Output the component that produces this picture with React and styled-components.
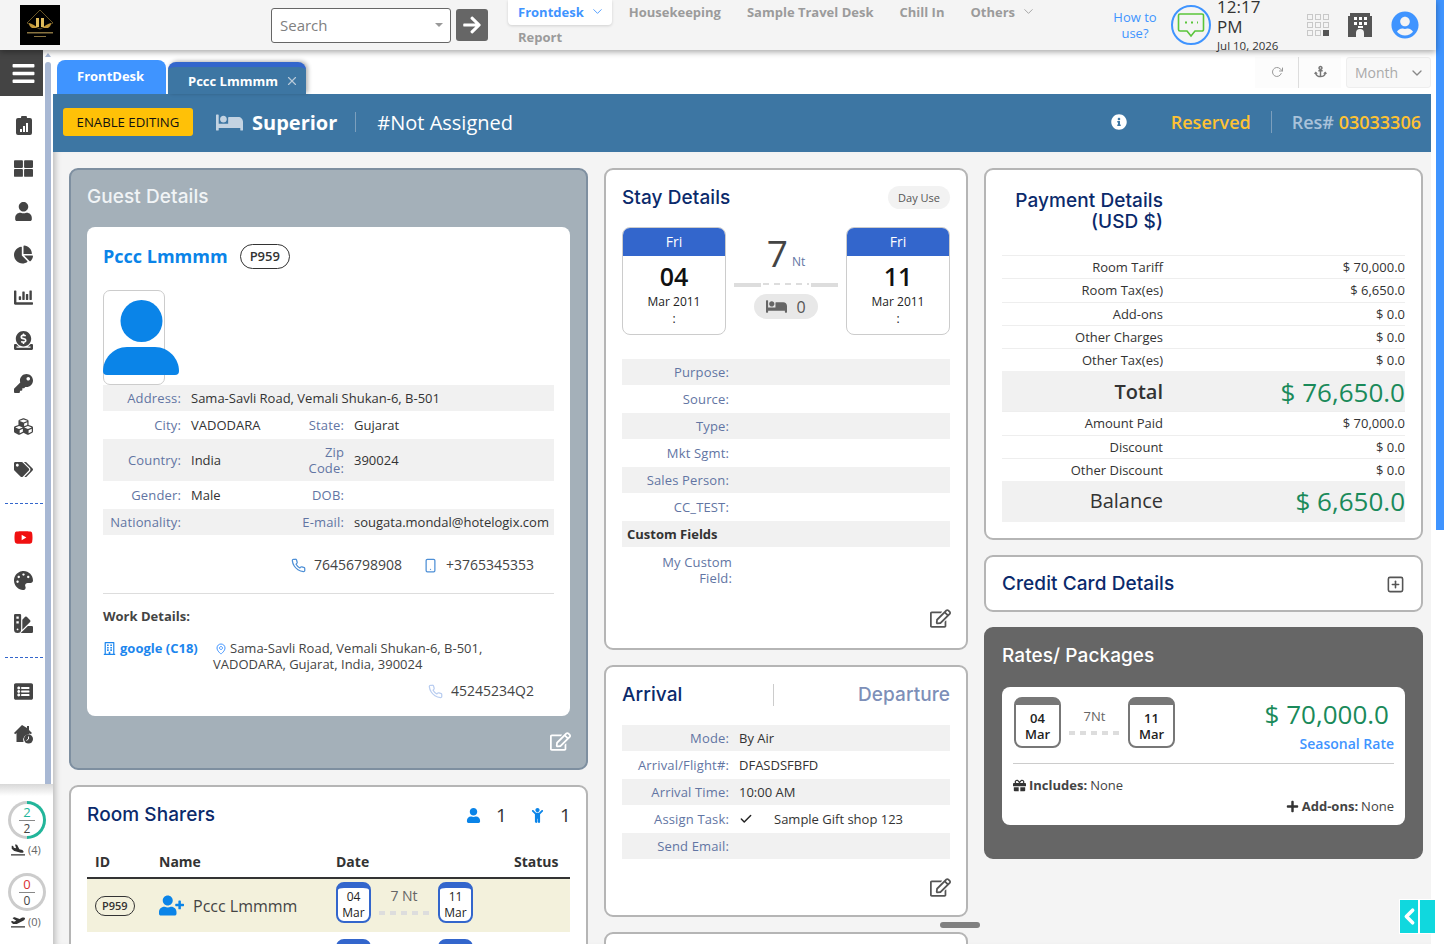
import React from "react";
import styled, { createGlobalStyle } from "styled-components";
import {
  FaAnchor, FaBed, FaChartPie, FaChild, FaCubes, FaDonate, FaGift, FaInfoCircle, FaKey,
  FaListAlt, FaPalette, FaPlaneArrival, FaPlaneDeparture, FaPlus, FaRegBuilding, FaRegEdit, FaSwatchbook,
  FaTags, FaThLarge, FaUser, FaUserCircle, FaUserPlus, FaYoutube, FaBars, FaArrowRight, FaChartBar,
} from "react-icons/fa";
import { FiCheck, FiChevronDown, FiPhone, FiPlusSquare, FiRotateCw, FiSmartphone, FiX, FiChevronLeft } from "react-icons/fi";
import { GrLocation } from "react-icons/gr";

const GlobalStyle = createGlobalStyle`
  html, body { margin: 0; height: 100%; overflow: hidden; background: #fff; }
  body { font-family: "Open Sans", "Liberation Sans", sans-serif; font-size: 13px; color: #333; }
  #root { height: 100%; }
  * { box-sizing: border-box; }
`;

const Page = styled.div`
  display: flex;
  width: 1444px;
  height: 944px;
  overflow: hidden;
  position: relative;
`;
const Shell = styled.div`
  width: 1436px;
  display: flex;
  flex-direction: column;
`;
const PageScroll = styled.div`
  width: 8px;
  height: 530px;
  background: #3f94ff;
`;

/* HEADER */
const Header = styled.header`
  height: 50px;
  flex: none;
  display: flex;
  background: #f4f4f4;
  box-shadow: 0 2px 6px rgba(0, 0, 0, 0.35);
  position: relative;
  z-index: 5;
`;
const LogoBox = styled.div`
  width: 40px;
  height: 40px;
  margin: 5px 0 0 20px;
  background: #000;
  flex: none;
`;
const SearchBox = styled.div`
  width: 180px;
  height: 35px;
  margin: 8px 0 0 211px;
  padding: 0 7px 2px 8px;
  display: flex;
  align-items: center;
  justify-content: space-between;
  background: #fff;
  border: 1px solid #666;
  border-radius: 3px;
  color: #808080;
  font-size: 15px;
  flex: none;
`;
const Caret = styled.span`
  border: 4px solid transparent;
  border-top: 4px solid #999;
  margin-top: 4px;
`;
const GoButton = styled.button`
  width: 32px;
  height: 32px;
  margin: 9px 0 0 5px;
  padding: 0;
  border: 0;
  border-radius: 3px;
  background: #666;
  color: #fff;
  display: flex;
  align-items: center;
  justify-content: center;
  font-size: 20px;
  flex: none;
`;
const Nav = styled.nav`
  width: 560px;
  margin-left: 20px;
  display: flex;
  flex-wrap: wrap;
  align-content: flex-start;
  flex: none;
`;
const NavItem = styled.span`
  height: 25px;
  padding: 0 ${(p) => (p.$active ? "7px" : "10px")} 2px ${(p) => (p.$active ? "10px" : "16px")};
  margin-right: ${(p) => (p.$active ? "1px" : "0")};
  display: flex;
  align-items: center;
  gap: 6px;
  font-size: 13px;
  font-weight: 700;
  color: ${(p) => (p.$active ? "#3f94ff" : "#9b9b9b")};
  background: ${(p) => (p.$active ? "#fff" : "transparent")};
  border-radius: 0 0 4px 4px;
  box-shadow: ${(p) => (p.$active ? "0 1px 3px rgba(0,0,0,.15)" : "none")};
  white-space: nowrap;
  svg { font-size: 15px; stroke-width: 1.4; }
`;
const NavBreak = styled.span`
  flex-basis: 100%;
  height: 0;
`;
const NavReport = styled(NavItem)`
  padding-left: 10px;
`;
const HowTo = styled.a`
  width: 50px;
  margin: 9px 0 0 42px;
  text-align: center;
  color: #3f94ff;
  font-size: 13px;
  line-height: 16px;
  flex: none;
`;
const ChatRing = styled.div`
  width: 40px;
  height: 40px;
  margin: 5px 0 0 11px;
  border: 2px solid #3f94ff;
  border-radius: 50%;
  display: flex;
  align-items: center;
  justify-content: center;
  flex: none;
`;
const Clock = styled.div`
  width: 70px;
  margin: -3px 0 0 6px;
  flex: none;
  color: #333;
  font-size: 17px;
  line-height: 19.5px;
  small { display: block; font-size: 11.5px; line-height: 20px; white-space: nowrap; }
`;
const HeaderIcons = styled.div`
  display: flex;
  align-items: center;
  gap: 19px;
  margin-left: 20px;
  height: 50px;
`;
const Avatar = styled(FaUserCircle)`
  font-size: 28px;
  color: #3f94ff;
`;

/* BODY AND SIDEBAR */
const Body = styled.div`
  flex: 1;
  display: flex;
  min-height: 0;
`;
const Sidebar = styled.aside`
  width: 53px;
  flex: none;
  display: flex;
  flex-direction: column;
  background: #fff;
`;
const SideTop = styled.div`
  flex: 1;
  display: flex;
  min-height: 0;
`;
const Rail = styled.div`
  width: 43px;
  flex: none;
`;
const Burger = styled.div`
  height: 46px;
  padding-left: 4px;
  background: #444;
  color: #fff;
  display: flex;
  align-items: center;
  justify-content: center;
  font-size: 25px;
  margin-bottom: 8px;
`;
const RailItem = styled.div`
  height: 43px;
  padding-left: 4px;
  display: flex;
  align-items: center;
  justify-content: center;
  color: ${(p) => p.$color || "#444"};
  font-size: 19px;
`;
const RailDivider = styled.div`
  height: 25px;
  display: flex;
  align-items: center;
  &::after {
    content: "";
    width: 38px;
    margin-left: 5px;
    border-top: 1px dashed #3366cc;
  }
`;
const RailScroll = styled.div`
  width: 6px;
  margin-left: 2px;
  position: relative;
  padding-top: 12px;
  flex: none;
  &::before {
    content: "";
    position: absolute;
    top: 3px;
    left: 0;
    border: 3px solid transparent;
    border-bottom: 4px solid #a8b8d4;
    border-top: 0;
  }
  &::after {
    content: "";
    display: block;
    height: 100%;
    background: #a8b8d4;
    border-radius: 3px 3px 0 0;
  }
`;
const SideBottom = styled.div`
  height: 160px;
  flex: none;
  background: linear-gradient(#d8d8d8, #fff 12px);
  padding-top: 17px;
  position: relative;
  display: flex;
  flex-direction: column;
  align-items: flex-start;
`;
const Gauge = styled.div`
  width: 38px;
  height: 38px;
  margin-left: 8px;
  border-radius: 50%;
  background: ${(p) => (p.$full ? "conic-gradient(#22b59a 0 50%, #ccc 50% 100%)" : "#ccc")};
  padding: 3px;
  flex: none;
`;
const GaugeFace = styled.div`
  width: 100%;
  height: 100%;
  border-radius: 50%;
  background: #fff;
  display: flex;
  flex-direction: column;
  align-items: center;
  justify-content: center;
  font-size: 12px;
  line-height: 15px;
  color: #444;
  b {
    font-weight: 400;
    font-size: 13px;
    line-height: 15px;
    width: 16px;
    text-align: center;
    border-bottom: 1px solid #888;
    color: ${(p) => p.$color};
  }
`;
const GaugeLabel = styled.div`
  margin: 4px 0 16px 11px;
  display: flex;
  align-items: center;
  gap: 3px;
  font-size: 11px;
  line-height: 14px;
  color: #666;
  svg { color: #333; font-size: 14px; }
`;

/* MAIN */
const Main = styled.main`
  width: 1378px;
  flex: none;
  display: flex;
  flex-direction: column;
  min-height: 0;
`;
const Gutter = styled.div`
  width: 5px;
  background: #fff;
`;
const TabBar = styled.div`
  height: 44px;
  flex: none;
  display: flex;
  align-items: flex-end;
  padding-left: 4px;
  gap: 2px;
  background: #fff;
  position: relative;
`;
const Tab = styled.div`
  height: ${(p) => (p.$current ? "32px" : "34px")};
  width: ${(p) => (p.$current ? "138px" : "109px")};
  padding: ${(p) => (p.$current ? "0 7px 0 20px" : "0 0 3px 20px")};
  display: flex;
  align-items: center;
  justify-content: space-between;
  background: ${(p) => (p.$current ? "#3d76a3" : "#3f94ff")};
  border-top: ${(p) => (p.$current ? "5px solid #3366cc" : "0")};
  border-radius: 8px 8px 0 0;
  box-shadow: ${(p) => (p.$current ? "2px -1px 4px rgba(0,0,0,.3)" : "none")};
  color: #fff;
  font-size: 13px;
  font-weight: 700;
  svg { color: #b9c9d8; font-size: 14px; }
`;
const TabTools = styled.div`
  margin-left: auto;
  align-self: flex-start;
  margin-top: 7px;
  display: flex;
  height: 31px;
  align-items: center;
  color: #777;
`;
const ToolButton = styled.span`
  width: 43px;
  height: 31px;
  padding-bottom: 2px;
  display: flex;
  align-items: center;
  justify-content: center;
  font-size: ${(p) => (p.$split ? "13px" : "12px")};
  color: ${(p) => (p.$split ? "#777" : "#999")};
  background: #fcfcfc;
  border-left: ${(p) => (p.$split ? "1px solid #ddd" : "0")};
`;
const PeriodSelect = styled.div`
  width: 85px;
  height: 31px;
  margin-left: 5px;
  padding: 0 5px 0 8px;
  display: flex;
  align-items: center;
  justify-content: space-between;
  background: #f8f8f8;
  border: 1px solid #eee;
  border-radius: 3px;
  color: #aaa;
  font-size: 14px;
  svg { color: #888; font-size: 16px; }
`;
const Band = styled.div`
  height: 58px;
  flex: none;
  padding: 0 10px 2px;
  display: flex;
  align-items: center;
  background: #3d76a3;
  color: #fff;
`;
const EnableButton = styled.button`
  width: 130px;
  height: 28px;
  padding: 0;
  border: 0;
  border-radius: 3px;
  background: #ffc107;
  color: #111;
  font: 500 13.2px "Open Sans", sans-serif;
`;
const RoomType = styled.span`
  margin-left: 23px;
  display: flex;
  align-items: center;
  gap: 9px;
  font-size: 20px;
  font-weight: 700;
  svg { font-size: 27px; color: #c3d3e2; }
`;
const BandDivider = styled.span`
  width: 1px;
  height: ${(p) => p.$h || "20px"};
  margin: ${(p) => p.$m || "0 21px 0 18px"};
  background: #7c9fbd;
`;
const RoomNumber = styled.span`
  font-size: 20px;
`;
const InfoIcon = styled(FaInfoCircle)`
  margin-left: auto;
  font-size: 16px;
`;
const StatusText = styled.span`
  margin-left: 44px;
  color: #ffc233;
  font-size: 18px;
  font-weight: 600;
`;
const ResNumber = styled.span`
  color: #a9c2da;
  font-size: 18px;
  font-weight: 600;
  b { color: #ffc233; font-weight: 600; }
`;
const Content = styled.div`
  flex: 1;
  min-height: 0;
  overflow: hidden;
  padding: 16px 8px 0 16px;
  display: flex;
  gap: 16px;
  background: #f4f4f4;
  box-shadow: inset 7px 0 6px -5px rgba(0, 0, 0, 0.25);
`;
const Column = styled.div`
  width: ${(p) => p.$w}px;
  flex: none;
  display: flex;
  flex-direction: column;
  gap: 15px;
`;
const Panel = styled.section`
  height: ${(p) => p.$h}px;
  flex: none;
  padding: 16px;
  display: flex;
  flex-direction: column;
  background: ${(p) => p.$bg || "#fff"};
  border: 2px solid ${(p) => p.$line || "#b5b5b5"};
  border-radius: 9px;
`;
const PanelTitle = styled.h2`
  margin: 0;
  font: 500 19px/22px Inter, "Open Sans", sans-serif;
  letter-spacing: 0.08px;
  color: ${(p) => p.$color || "#0b2a6b"};
`;
const EditIcon = styled(FaRegEdit)`
  margin: auto -1px ${(p) => p.$lift || 0}px 0;
  align-self: flex-end;
  flex: none;
  font-size: 21px;
  color: ${(p) => p.$color || "#555"};
`;

/* GUEST */
const GuestCard = styled.div`
  height: 489px;
  margin-top: 19px;
  padding: 16px;
  background: #fff;
  border-radius: 8px;
  flex: none;
`;
const GuestName = styled.div`
  display: flex;
  align-items: center;
  gap: 12px;
  height: 26px;
  font-size: 18px;
  font-weight: 700;
  color: #0a84e8;
`;
const IdPill = styled.span`
  padding: 0 ${(p) => (p.$small ? "6px" : "9px")};
  height: ${(p) => (p.$small ? "20px" : "25px")};
  display: inline-flex;
  align-items: center;
  border: 1px solid #333;
  border-radius: 13px;
  font-size: ${(p) => (p.$small ? "11px" : "13px")};
  font-weight: 600;
  color: #333;
`;
const PhotoBox = styled.div`
  width: 62px;
  height: 95px;
  margin-top: 21px;
  padding-top: 9px;
  border: 1px solid #ccc;
  border-radius: 7px;
  svg { display: block; overflow: visible; margin-left: -1px; }
`;
const InfoRow = styled.div`
  min-height: ${(p) => (p.$shade ? "26px" : "28px")};
  padding: ${(p) => (p.$tall ? "5px 0" : "0")};
  display: grid;
  grid-template-columns: ${(p) => p.$cols};
  column-gap: 10px;
  align-items: center;
  background: ${(p) => (p.$shade ? "#f1f1f1" : "transparent")};
  line-height: 16px;
`;
const Label = styled.span`
  text-align: right;
  font-weight: 500;
  letter-spacing: 0.15px;
  color: #6275a3;
`;
const NarrowLabel = styled(Label)`
  padding-left: 30px;
  margin-top: 2px;
`;
const Value = styled.span`
  color: #333;
  white-space: nowrap;
  grid-column: ${(p) => (p.$wide ? "span 3" : "auto")};
`;
const PhoneRow = styled.div`
  margin-top: ${(p) => p.$mt || "20px"};
  padding-right: 20px;
  display: flex;
  justify-content: flex-end;
  align-items: center;
  gap: 8px;
  font-size: 14px;
  line-height: 20px;
  color: #444;
  svg { font-size: 15px; color: ${(p) => p.$icon || "#4d8fd6"}; }
`;
const PhoneNo = styled.span`
  margin-right: ${(p) => (p.$spaced ? "13px" : "0")};
`;
const Rule = styled.hr`
  margin: 18px 0 0;
  border: 0;
  border-top: 1px solid #ddd;
`;
const WorkTitle = styled.div`
  margin-top: 13px;
  font-weight: 700;
  color: #444;
  line-height: 18px;
`;
const WorkRow = styled.div`
  margin-top: 15px;
  display: grid;
  grid-template-columns: 110px 1fr;
  align-items: start;
  line-height: 16px;
  color: #444;
`;
const Company = styled.span`
  display: flex;
  align-items: center;
  gap: 4px;
  font-weight: 700;
  color: #1c86ee;
  svg { font-size: 13px; }
`;
const Address = styled.span`
  svg { vertical-align: -2px; margin: 0 3px 0 2px; font-size: 12px; }
  svg path { stroke: #3f94ff; }
`;

/* SHARERS */
const SharerHead = styled.div`
  display: flex;
  align-items: center;
  justify-content: space-between;
  height: 24px;
`;
const Counts = styled.div`
  display: flex;
  align-items: center;
  margin-right: 2px;
  font-size: 19px;
  color: #333;
  svg { color: #0a84e8; font-size: 15px; margin-right: 15px; }
  span { width: 34px; }
  span:last-child { width: 8px; }
`;
const SharerGrid = styled.div`
  margin-top: 25px;
  display: grid;
  grid-template-columns: 72px 177px 178px 1fr;
`;
const HeadCell = styled.div`
  padding: 0 0 6px ${(p) => p.$pad || "0"};
  font-size: 14px;
  font-weight: 700;
  line-height: 19px;
  color: #333;
  border-bottom: 2px solid #333;
`;
const SharerCell = styled.div`
  height: ${(p) => p.$h || "53px"};
  display: flex;
  align-items: center;
  gap: 9px;
  padding-left: ${(p) => p.$pad || "0"};
  background: ${(p) => p.$bg || "#f3f1dc"};
  font-size: 16px;
  color: #444;
  svg { color: #0a84e8; font-size: 25px; }
`;
const SharerGap = styled.div`
  grid-column: 1 / -1;
  height: 4px;
`;
const MiniCard = styled.div`
  width: ${(p) => (p.$big ? "47px" : "35px")};
  height: ${(p) => (p.$big ? "51px" : "41px")};
  flex: none;
  display: flex;
  align-items: center;
  justify-content: center;
  text-align: center;
  background: #fff;
  border: 2px solid ${(p) => (p.$big ? "#777" : "#3366cc")};
  border-top-width: ${(p) => (p.$big ? "8px" : "6px")};
  border-radius: 8px;
  font-size: ${(p) => (p.$big ? "13px" : "12px")};
  font-weight: ${(p) => (p.$big ? "600" : "400")};
  line-height: 16px;
  color: #222;
`;
const MiniStay = styled.div`
  flex: 1;
  display: flex;
  flex-direction: column;
  align-items: center;
  gap: 6px;
  margin: ${(p) => (p.$big ? "10px 8px 0" : "5px 9px 0 8px")};
  color: #666;
  font-size: ${(p) => (p.$big ? "13px" : "14px")};
  line-height: 18px;
`;
const Dashes = styled.div`
  width: 100%;
  height: ${(p) => p.$h || "4px"};
  background: repeating-linear-gradient(90deg, #ddd 0 6px, transparent 6px 11px);
`;
const DateCell = styled(SharerCell)`
  grid-column: span 2;
  align-items: flex-start;
  gap: 0;
  padding: 3px 97px 0 0;
`;

/* STAY */
const PanelHead = styled.div`
  display: flex;
  align-items: center;
  justify-content: space-between;
  height: 23px;
`;
const DayUse = styled.span`
  width: 62px;
  height: 23px;
  display: flex;
  align-items: center;
  justify-content: center;
  background: #f2f2f2;
  border-radius: 12px;
  font-size: 11px;
  color: #555;
`;
const StayDates = styled.div`
  margin-top: 18px;
  display: grid;
  grid-template-columns: 104px 1fr 104px;
  column-gap: 8px;
`;
const DateCard = styled.div`
  height: 108px;
  display: flex;
  flex-direction: column;
  align-items: center;
  border: 1px solid #ccc;
  border-radius: 8px;
  overflow: hidden;
  font-size: 12px;
  line-height: 16px;
  color: #222;
  strong { margin-top: 3px; font-size: 25px; font-weight: 600; line-height: 34px; color: #111; }
  span { margin-top: 1px; }
`;
const DateHead = styled.div`
  width: calc(100% + 2px);
  height: 29px;
  margin-top: -1px;
  display: flex;
  align-items: center;
  justify-content: center;
  background: #3366cc;
  color: #fff;
  font-size: 14px;
`;
const StayNights = styled.div`
  display: flex;
  flex-direction: column;
  align-items: center;
`;
const Nights = styled.div`
  height: 48px;
  display: flex;
  align-items: flex-end;
  gap: 4px;
  margin-top: 1px;
  font-size: 37px;
  line-height: 46px;
  color: #444;
  span { font-size: 12px; line-height: 28px; color: #6275a3; }
`;
const NightLine = styled.div`
  width: 100%;
  margin-top: 7px;
  display: grid;
  grid-template-columns: 27px 1fr 27px;
  column-gap: 2px;
  i { background: #ddd; height: 4px; }
`;
const BedPill = styled.div`
  width: 64px;
  height: 25px;
  margin-top: 7px;
  display: flex;
  align-items: center;
  justify-content: center;
  gap: 9px;
  background: #e8e8e8;
  border-radius: 13px;
  font-size: 16px;
  color: #555;
  svg { font-size: 21px; color: #666; }
`;
const DetailRows = styled.div`
  margin-top: ${(p) => p.$mt || "24px"};
`;
const CustomHead = styled.div`
  height: 26px;
  padding-left: 5px;
  display: flex;
  align-items: center;
  background: #f1f1f1;
  font-weight: 700;
  color: #333;
`;

/* ARRIVAL */
const ArrivalHead = styled.div`
  margin-top: 1px;
  height: 22px;
  display: grid;
  grid-template-columns: 151px 1fr;
  align-items: center;
`;
const ArrivalTab = styled(PanelTitle)`
  height: 22px;
  text-align: ${(p) => (p.$off ? "right" : "left")};
  color: ${(p) => (p.$off ? "#7d8fb8" : "#0b2a6b")};
  border-left: ${(p) => (p.$off ? "1px solid #ccc" : "0")};
`;
const CheckIcon = styled(FiCheck)`
  margin-right: 21px;
  font-size: 14px;
  stroke-width: 2.5;
  vertical-align: -2px;
  color: #222;
`;
const NextPanel = styled.section`
  height: 60px;
  flex: none;
  background: #fff;
  border: 2px solid #b5b5b5;
  border-radius: 9px;
`;

/* PAYMENT */
const PayTitle = styled(PanelTitle)`
  width: 161px;
  margin: 4px 0 23px;
  text-align: right;
  line-height: 21px;
`;
const PayRow = styled.div`
  height: 23.4px;
  display: grid;
  grid-template-columns: 161px 1fr;
  align-items: center;
  text-align: right;
  border-top: 1px solid #eee;
  color: #333;
  line-height: 16px;
`;
const PayTotalRow = styled(PayRow)`
  height: ${(p) => (p.$balance ? "41px" : "40px")};
  padding: ${(p) => (p.$balance ? "0 0 2px" : "2px 0 0")};
  border-top: 0;
  background: #f1f1f1;
`;
const PayRowLabel = styled.span`
  font-size: ${(p) => p.$size || "13px"};
  font-weight: ${(p) => p.$weight || 400};
  white-space: nowrap;
`;
const Amount = styled.span`
  color: #1a8a5a;
  font-size: 26px;
  font-weight: 400;
  line-height: 34px;
  white-space: nowrap;
`;
const CardHead = styled.div`
  display: flex;
  align-items: center;
  justify-content: space-between;
  height: 22px;
  svg { font-size: 19px; color: #555; }
`;

/* RATES */
const RateCard = styled.div`
  height: 138px;
  margin-top: 20px;
  padding: 10px 11px;
  background: #fff;
  border-radius: 8px;
  flex: none;
`;
const RateTop = styled.div`
  display: flex;
  height: 67px;
  border-bottom: 1px solid #ccc;
`;
const RateStay = styled.div`
  width: 161px;
  margin-left: 1px;
  display: flex;
  align-items: flex-start;
`;
const RatePrice = styled.div`
  flex: 1;
  text-align: right;
  color: #3f94ff;
  font-size: 14px;
  font-weight: 600;
  line-height: 18px;
`;
const PriceLine = styled(Amount)`
  display: block;
  margin: 0 5px 4px 0;
`;
const RateLine = styled.div`
  margin-top: ${(p) => p.$mt};
  display: flex;
  justify-content: ${(p) => (p.$right ? "flex-end" : "flex-start")};
  align-items: center;
  gap: 3px;
  line-height: 18px;
  color: #444;
  b { font-weight: 700; }
  svg { font-size: 13px; color: #333; }
`;
const ScrollThumb = styled.div`
  position: absolute;
  left: 940px;
  top: 922px;
  width: 40px;
  height: 6px;
  border-radius: 3px;
  background: #808080;
`;
const Dock = styled.div`
  position: absolute;
  right: 8px;
  top: 899px;
  padding: 1px;
  display: flex;
  gap: 2px;
  background: #fff;
`;
const DockButton = styled.span`
  width: ${(p) => p.$w}px;
  height: 33px;
  display: flex;
  align-items: center;
  justify-content: center;
  background: #10d8de;
  color: #fff;
  font-size: 25px;
  svg { stroke-width: 3.5; flex: none; }
`;

const ClipboardIcon = () => (
  <svg width="16" height="19" viewBox="0 0 16 19">
    <path fill="#444" d="M2 2h3a3 3 0 0 1 6 0h3a2 2 0 0 1 2 2v13a2 2 0 0 1-2 2H2a2 2 0 0 1-2-2V4a2 2 0 0 1 2-2z" />
    <path fill="#fff" d="M4 13h2v3H4zM7 10h2v6H7zM10 7h2v9h-2z" />
  </svg>
);
const HouseClockIcon = () => (
  <svg width="20" height="19" viewBox="0 0 20 19">
    <path fill="#444" d="M8 0 0 8l1.2 1.2L2.5 8v9h7a5.5 5.5 0 0 1 6-7.5V8l1.2 1.2L18 8l-3-3V1h-2v2z" />
    <circle cx="14.5" cy="14" r="4.5" fill="#444" />
    <path stroke="#fff" strokeWidth="1" fill="none" d="M14.5 11.5V14l-2 1.5" />
  </svg>
);
const PhotoPerson = () => (
  <svg width="76" height="76" viewBox="0 0 76 76">
    <circle cx="38.5" cy="21" r="21" fill="#0a84e8" />
    <path fill="#0a84e8" d="M24 47h28c14 0 24 12 24 24a4 4 0 0 1-4 4H4a4 4 0 0 1-4-4c0-12 10-24 24-24z" />
  </svg>
);
const Logo = () => (
  <svg width="40" height="40" viewBox="0 0 40 40">
    <path fill="none" stroke="#a98a3c" strokeWidth=".6" d="M20 5 33 18 20 24 7 18z" />
    <path fill="#c49a3a" d="M9 18c3 1 6 2 8 5h-5c-2-1-3-3-3-5zM31 18c-3 1-6 2-8 5h5c2-1 3-3 3-5z" />
    <path fill="#e0bc5c" d="M16 13h3v9h-3zM21 13h3v9h-3z" />
    <path fill="#8a7440" d="M7 27h26v1.4H7zM14 31h12v1H14z" />
  </svg>
);
const ChatIcon = () => (
  <svg width="28" height="26" viewBox="0 0 28 26" fill="none" stroke="#5ac53a" strokeWidth="1.6">
    <path d="M3 2h22a1.500 1.500 0 0 1 1.500 1.500v14A1.500 1.500 0 0 1 25 19h-7l-4 5-4-5H3a1.500 1.500 0 0 1-1.500-1.500v-14A1.500 1.500 0 0 1 3 2z" />
    <path strokeWidth="2.2" strokeDasharray="2 4" d="M8 10.500h13" />
  </svg>
);
const AppGridIcon = () => (
  <svg width="22" height="22" viewBox="0 0 22 22" fill="none" stroke="#c8c8c8">
    {[0, 8, 16].map((y) =>
      [0, 8, 16].map((x) =>
        x === 16 && y === 16 ? (
          <rect key={`${x}${y}`} x="16" y="16" width="6" height="6" fill="#555" stroke="none" />
        ) : (
          <rect key={`${x}${y}`} x={x + 0.5} y={y + 0.5} width="5" height="5" />
        )
      )
    )}
  </svg>
);
const HotelIcon = () => (
  <svg width="24" height="24" viewBox="0 0 24 24">
    <path fill="#555" d="M0 3h2V0h20v3h2v21h-8v-4a4 4 0 0 0-8 0v4H0z" />
    <path fill="#fff" d="M6 4h3v3H6zM11 4h3v3h-3zM16 4h3v3h-3zM6 9h3v3H6zM11 9h3v3h-3zM16 9h3v3h-3zM10 13h5v2h-5z" />
  </svg>
);

const guestCols = "78px 93px 50px 1fr";
const detailCols = "107px 1fr";

const railTop = [
  <ClipboardIcon />, <FaThLarge />, <FaUser />, <FaChartPie />, <FaChartBar />,
  <FaDonate />, <FaKey />, <FaCubes />, <FaTags />,
];
const stayRows = ["Purpose:", "Source:", "Type:", "Mkt Sgmt:", "Sales Person:", "CC_TEST:"];
const arrivalRows = [
  ["Mode:", "By Air"],
  ["Arrival/Flight#:", "DFASDSFBFD"],
  ["Arrival Time:", "10:00 AM"],
  ["Assign Task:", <><CheckIcon />Sample Gift shop 123</>],
  ["Send Email:", ""],
];
const chargeRows = [
  ["Room Tariff", "$ 70,000.0"],
  ["Room Tax(es)", "$ 6,650.0"],
  ["Add-ons", "$ 0.0"],
  ["Other Charges", "$ 0.0"],
  ["Other Tax(es)", "$ 0.0"],
];
const paidRows = [
  ["Amount Paid", "$ 70,000.0"],
  ["Discount", "$ 0.0"],
  ["Other Discount", "$ 0.0"],
];

const App = () => {
  return (
    <Page>
      <GlobalStyle />
      <Shell>
        <Header>
          <LogoBox><Logo /></LogoBox>
          <SearchBox>Search<Caret /></SearchBox>
          <GoButton><FaArrowRight /></GoButton>
          <Nav>
            <NavItem $active>Frontdesk <FiChevronDown /></NavItem>
            <NavItem>Housekeeping</NavItem>
            <NavItem>Sample Travel Desk</NavItem>
            <NavItem>Chill In</NavItem>
            <NavItem>Others <FiChevronDown /></NavItem>
            <NavBreak />
            <NavReport>Report</NavReport>
          </Nav>
          <HowTo>How to use?</HowTo>
          <ChatRing><ChatIcon /></ChatRing>
          <Clock>12:17 PM<small>Jul 10, 2026</small></Clock>
          <HeaderIcons>
            <AppGridIcon />
            <HotelIcon />
            <Avatar />
          </HeaderIcons>
        </Header>
        <Body>
          <Sidebar>
            <SideTop>
              <Rail>
                <Burger><FaBars /></Burger>
                {railTop.map((icon, index) => (
                  <RailItem key={index}>{icon}</RailItem>
                ))}
                <RailDivider />
                <RailItem $color="#f01010"><FaYoutube /></RailItem>
                <RailItem><FaPalette /></RailItem>
                <RailItem><FaSwatchbook /></RailItem>
                <RailDivider />
                <RailItem><FaListAlt /></RailItem>
                <RailItem><HouseClockIcon /></RailItem>
              </Rail>
              <RailScroll />
            </SideTop>
            <SideBottom>
              <Gauge $full>
                <GaugeFace $color="#22b59a"><b>2</b>2</GaugeFace>
              </Gauge>
              <GaugeLabel><FaPlaneArrival />(4)</GaugeLabel>
              <Gauge>
                <GaugeFace $color="#d93030"><b>0</b>0</GaugeFace>
              </Gauge>
              <GaugeLabel><FaPlaneDeparture />(0)</GaugeLabel>
            </SideBottom>
          </Sidebar>
          <Main>
            <TabBar>
              <Tab>FrontDesk</Tab>
              <Tab $current>Pccc Lmmmm <FiX /></Tab>
              <TabTools>
                <ToolButton><FiRotateCw /></ToolButton>
                <ToolButton $split><FaAnchor /></ToolButton>
                <PeriodSelect>Month <FiChevronDown /></PeriodSelect>
              </TabTools>
            </TabBar>
            <Band>
              <EnableButton>ENABLE EDITING</EnableButton>
              <RoomType><FaBed />Superior</RoomType>
              <BandDivider />
              <RoomNumber>#Not Assigned</RoomNumber>
              <InfoIcon />
              <StatusText>Reserved</StatusText>
              <BandDivider $h="22px" $m="0 20px" />
              <ResNumber>Res# <b>03033306</b></ResNumber>
            </Band>
            <Content>
              <Column $w={519}>
                <Panel $h={602} $bg="#a4b0b9" $line="#7e8fa0">
                  <PanelTitle $color="#f1f4f6">Guest Details</PanelTitle>
                  <GuestCard>
                    <GuestName>Pccc Lmmmm <IdPill>P959</IdPill></GuestName>
                    <PhotoBox><PhotoPerson /></PhotoBox>
                    <InfoRow $shade $cols={guestCols}>
                      <Label>Address:</Label>
                      <Value $wide>Sama-Savli Road, Vemali Shukan-6, B-501</Value>
                    </InfoRow>
                    <InfoRow $cols={guestCols}>
                      <Label>City:</Label><Value>VADODARA</Value>
                      <Label>State:</Label><Value>Gujarat</Value>
                    </InfoRow>
                    <InfoRow $shade $tall $cols={guestCols}>
                      <Label>Country:</Label><Value>India</Value>
                      <Label>Zip Code:</Label><Value>390024</Value>
                    </InfoRow>
                    <InfoRow $cols={guestCols}>
                      <Label>Gender:</Label><Value>Male</Value>
                      <Label>DOB:</Label><Value />
                    </InfoRow>
                    <InfoRow $shade $cols={guestCols}>
                      <Label>Nationality:</Label><Value />
                      <Label>E-mail:</Label><Value>sougata.mondal@hotelogix.com</Value>
                    </InfoRow>
                    <PhoneRow>
                      <FiPhone /><PhoneNo $spaced>76456798908</PhoneNo>
                      <FiSmartphone /><PhoneNo>+3765345353</PhoneNo>
                    </PhoneRow>
                    <Rule />
                    <WorkTitle>Work Details:</WorkTitle>
                    <WorkRow>
                      <Company><FaRegBuilding />google (C18)</Company>
                      <Address><GrLocation />Sama-Savli Road, Vemali Shukan-6, B-501, VADODARA, Gujarat, India, 390024</Address>
                    </WorkRow>
                    <PhoneRow $mt="9px" $icon="#b9cdf0">
                      <FiPhone /><PhoneNo>45245234Q2</PhoneNo>
                    </PhoneRow>
                  </GuestCard>
                  <EditIcon $color="#fff" />
                </Panel>
                <Panel $h={220}>
                  <SharerHead>
                    <PanelTitle>Room Sharers</PanelTitle>
                    <Counts>
                      <FaUser /><span>1</span>
                      <FaChild /><span>1</span>
                    </Counts>
                  </SharerHead>
                  <SharerGrid>
                    <HeadCell $pad="8px">ID</HeadCell>
                    <HeadCell>Name</HeadCell>
                    <HeadCell>Date</HeadCell>
                    <HeadCell>Status</HeadCell>
                    <SharerCell $pad="8px"><IdPill $small>P959</IdPill></SharerCell>
                    <SharerCell><FaUserPlus />Pccc Lmmmm</SharerCell>
                    <DateCell>
                      <MiniCard>04<br />Mar</MiniCard>
                      <MiniStay>7 Nt<Dashes /></MiniStay>
                      <MiniCard>11<br />Mar</MiniCard>
                    </DateCell>
                    <SharerGap />
                    <SharerCell $bg="transparent" $h="41px" />
                    <SharerCell $bg="transparent" $h="41px" />
                    <DateCell $bg="transparent" $h="41px">
                      <MiniCard />
                      <MiniStay />
                      <MiniCard />
                    </DateCell>
                  </SharerGrid>
                </Panel>
              </Column>
              <Column $w={364}>
                <Panel $h={482}>
                  <PanelHead>
                    <PanelTitle>Stay Details</PanelTitle>
                    <DayUse>Day Use</DayUse>
                  </PanelHead>
                  <StayDates>
                    <DateCard>
                      <DateHead>Fri</DateHead>
                      <strong>04</strong>
                      <span>Mar 2011</span>
                      <span>:</span>
                    </DateCard>
                    <StayNights>
                      <Nights>7<span>Nt</span></Nights>
                      <NightLine><i /><Dashes $h="2px" /><i /></NightLine>
                      <BedPill><FaBed />0</BedPill>
                    </StayNights>
                    <DateCard>
                      <DateHead>Fri</DateHead>
                      <strong>11</strong>
                      <span>Mar 2011</span>
                      <span>:</span>
                    </DateCard>
                  </StayDates>
                  <DetailRows>
                    {stayRows.map((label, index) => (
                      <InfoRow key={label} $shade={index % 2 === 0} $cols={detailCols}>
                        <Label>{label}</Label><Value />
                      </InfoRow>
                    ))}
                    <CustomHead>Custom Fields</CustomHead>
                    <InfoRow $tall $cols="110px 1fr">
                      <NarrowLabel>My Custom Field:</NarrowLabel><Value />
                    </InfoRow>
                  </DetailRows>
                  <EditIcon $lift={3} />
                </Panel>
                <Panel $h={252}>
                  <ArrivalHead>
                    <ArrivalTab>Arrival</ArrivalTab>
                    <ArrivalTab $off>Departure</ArrivalTab>
                  </ArrivalHead>
                  <DetailRows $mt="19px">
                    {arrivalRows.map(([label, value], index) => (
                      <InfoRow key={label} $shade={index % 2 === 0} $cols={detailCols}>
                        <Label>{label}</Label><Value>{value}</Value>
                      </InfoRow>
                    ))}
                  </DetailRows>
                  <EditIcon $lift={1} />
                </Panel>
                <NextPanel />
              </Column>
              <Column $w={439}>
                <Panel $h={372}>
                  <PayTitle>Payment Details (USD $)</PayTitle>
                  {chargeRows.map(([label, value]) => (
                    <PayRow key={label}>
                      <PayRowLabel>{label}</PayRowLabel><span>{value}</span>
                    </PayRow>
                  ))}
                  <PayTotalRow>
                    <PayRowLabel $size="20px" $weight={600}>Total</PayRowLabel><Amount>$ 76,650.0</Amount>
                  </PayTotalRow>
                  {paidRows.map(([label, value]) => (
                    <PayRow key={label}>
                      <PayRowLabel>{label}</PayRowLabel><span>{value}</span>
                    </PayRow>
                  ))}
                  <PayTotalRow $balance>
                    <PayRowLabel $size="20px">Balance</PayRowLabel><Amount>$ 6,650.0</Amount>
                  </PayTotalRow>
                </Panel>
                <Panel $h={57}>
                  <CardHead>
                    <PanelTitle>Credit Card Details</PanelTitle>
                    <FiPlusSquare />
                  </CardHead>
                </Panel>
                <Panel $h={232} $bg="#666" $line="#666">
                  <PanelTitle $color="#fff">Rates/ Packages</PanelTitle>
                  <RateCard>
                    <RateTop>
                      <RateStay>
                        <MiniCard $big>04<br />Mar</MiniCard>
                        <MiniStay $big>7Nt<Dashes /></MiniStay>
                        <MiniCard $big>11<br />Mar</MiniCard>
                      </RateStay>
                      <RatePrice>
                        <PriceLine>$ 70,000.0</PriceLine>
                        Seasonal Rate
                      </RatePrice>
                    </RateTop>
                    <RateLine $mt="12px"><FaGift /> <b>Includes:</b> None</RateLine>
                    <RateLine $right $mt="3px"><FaPlus /> <b>Add-ons:</b> None</RateLine>
                  </RateCard>
                </Panel>
              </Column>
            </Content>
          </Main>
          <Gutter />
        </Body>
      </Shell>
      <PageScroll />
      <ScrollThumb />
      <Dock>
        <DockButton $w={18}><FiChevronLeft /></DockButton>
        <DockButton $w={15} />
      </Dock>
    </Page>
  );
};

export default App;
